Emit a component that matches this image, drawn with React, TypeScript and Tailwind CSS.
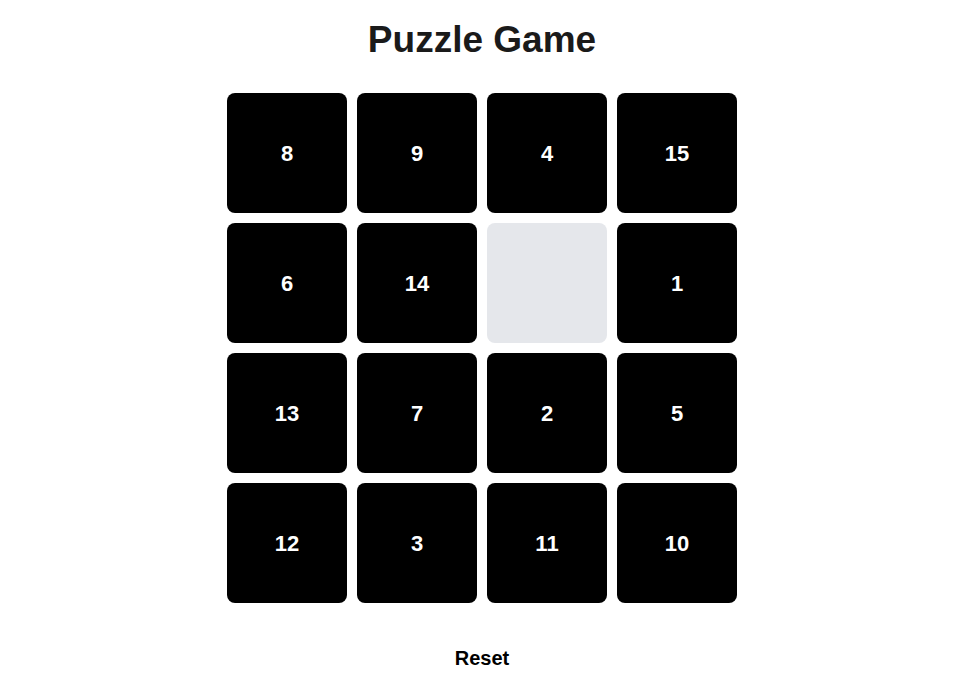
import React, { useState } from 'react';

const START = [8, 9, 4, 15, 6, 14, 0, 1, 13, 7, 2, 5, 12, 3, 11, 10];

const App = () => {
  const [tiles, setTiles] = useState<number[]>(START);

  const move = (i: number) => {
    const empty = tiles.indexOf(0);
    const r1 = Math.floor(i / 4);
    const c1 = i % 4;
    const r2 = Math.floor(empty / 4);
    const c2 = empty % 4;
    if (Math.abs(r1 - r2) + Math.abs(c1 - c2) !== 1) return;
    const next = [...tiles];
    next[empty] = tiles[i];
    next[i] = 0;
    setTiles(next);
  };

  return (
    <div
      className="flex flex-col items-center min-h-screen bg-white pl-[6px]"
      style={{ fontFamily: '"Liberation Sans", Arial, sans-serif' }}
    >
      <h1 className="mt-5 text-[37px] leading-10 font-bold text-[#1a1a1a]">Puzzle Game</h1>
      <div className="grid grid-cols-4 gap-[10px] mt-[33px]">
        {tiles.map((n, i) =>
          n === 0 ? (
            <div key={i} className="w-[120px] h-[120px] rounded-lg bg-[#e5e7eb]" />
          ) : (
            <button
              key={i}
              type="button"
              onClick={() => move(i)}
              className="w-[120px] h-[120px] rounded-lg bg-black text-white text-[22px] font-bold flex items-center justify-center"
            >
              {n}
            </button>
          )
        )}
      </div>
      <button
        type="button"
        className="mt-[43px] text-xl font-bold text-black leading-6"
        onClick={() => setTiles(START)}
      >
        Reset
      </button>
    </div>
  );
};

export default App;
